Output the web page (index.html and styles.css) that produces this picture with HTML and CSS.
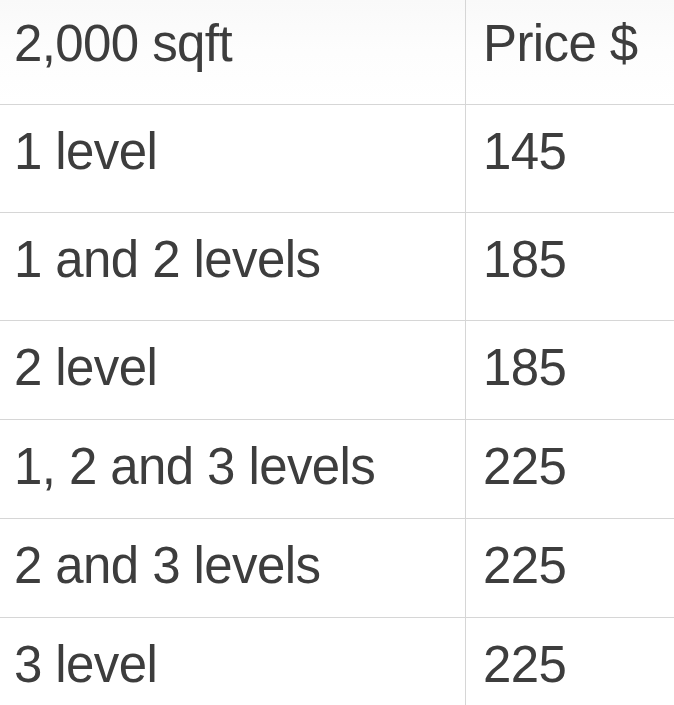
FILE: index.html
```html
<!DOCTYPE html>
<html>
<head>
<meta charset="utf-8">
<link rel="stylesheet" href="styles.css">
</head>
<body>
<div class="table">
  <div class="row head"><div class="cell c1">2,000 sqft</div><div class="cell c2">Price $</div></div>
  <div class="row lg"><div class="cell c1">1 level</div><div class="cell c2">145</div></div>
  <div class="row lg"><div class="cell c1">1 and 2 levels</div><div class="cell c2">185</div></div>
  <div class="row md"><div class="cell c1">2 level</div><div class="cell c2">185</div></div>
  <div class="row md"><div class="cell c1">1, 2 and 3 levels</div><div class="cell c2">225</div></div>
  <div class="row md"><div class="cell c1">2 and 3 levels</div><div class="cell c2">225</div></div>
  <div class="row last"><div class="cell c1">3 level</div><div class="cell c2">225</div></div>
</div>
</body>
</html>
```
FILE: styles.css
```css
* { box-sizing: border-box; }
html, body { margin: 0; padding: 0; background: #fff; }
body { width: 674px; height: 705px; overflow: hidden; }
.table {
  display: flex;
  flex-direction: column;
  font-family: "Liberation Sans", Arial, sans-serif;
  font-size: 51px;
  line-height: 51px;
  letter-spacing: -0.6px;
  color: #3d3d3d;
}
.row {
  display: grid;
  grid-template-columns: 466px 1fr;
  border-bottom: 1px solid #d6d6d6;
}
.head { height: 105px; background: linear-gradient(180deg, #f9f9f9 0%, #fdfdfd 50%, #fff 100%); }
.lg { height: 108px; }
.md { height: 99px; }
.last { height: 100px; border-bottom: none; }
.cell { padding-top: 21px; white-space: nowrap; }
.head .cell { padding-top: 18px; }
.c1 { padding-left: 14px; border-right: 1px solid #d6d6d6; }
.c2 { padding-left: 17px; }
```
